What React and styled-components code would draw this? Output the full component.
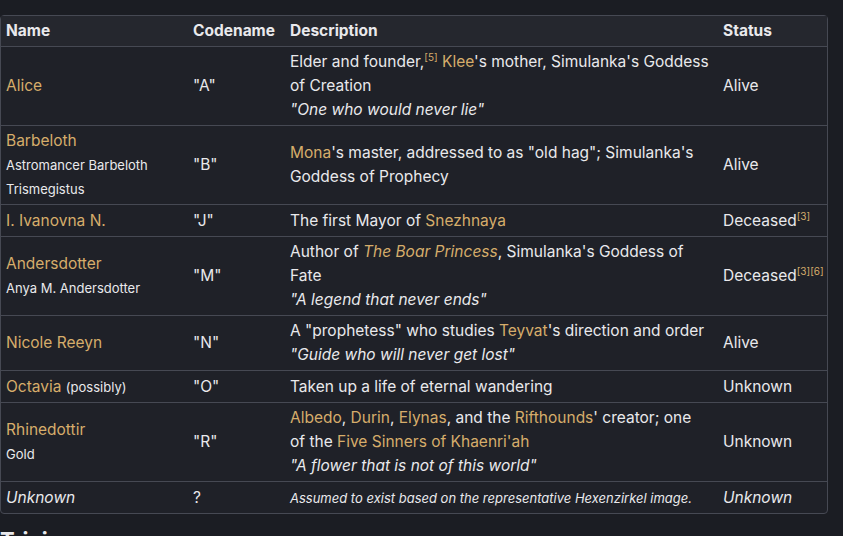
import styled, { createGlobalStyle } from "styled-components";

const GlobalStyle = createGlobalStyle`
  html, body {
    margin: 0;
    padding: 0;
    background: #1b1d23;
    color: #e9e9ec;
    font-family: Inter, "Open Sans", "Liberation Sans", sans-serif;
  }
`;

const Page = styled.div`
  padding: 15px 15px 0 0;
  height: 536px;
  box-sizing: border-box;
  overflow: hidden;
`;

const Table = styled.table`
  width: 828px;
  table-layout: fixed;
  border-collapse: separate;
  border-spacing: 0;
  border: 1px solid #464953;
  border-radius: 4px;
  background: #1f2128;
  font-size: 15.5px;
  line-height: 24px;
`;

const Th = styled.th`
  text-align: left;
  font-weight: 700;
  padding: 3px 5px;
  background: #25272e;
`;

const Td = styled.td`
  height: 25px;
  padding: 3px 5px;
  border-top: 1px solid #464953;
  vertical-align: middle;
  white-space: ${(p) => (p.$nowrap ? "nowrap" : "normal")};
  font-style: ${(p) => (p.$italic ? "italic" : "normal")};
  font-size: ${(p) => (p.$small ? "13px" : "inherit")};
`;

const Link = styled.span`
  color: #d6ad6b;
`;

const Sub = styled.span`
  font-size: 13px;
`;

const Quote = styled.i`
  display: block;
`;

const Ref = styled.sup`
  font-size: 10px;
  line-height: 0;
  color: #d6ad6b;
`;

const Heading = styled.h2`
  margin: 12px 0 0 0;
  font-size: 22px;
  line-height: 28px;
`;

const rows = [
  {
    name: <Link>Alice</Link>,
    code: '"A"',
    desc: (
      <>
        Elder and founder,<Ref>[5]</Ref> <Link>Klee</Link>'s mother, Simulanka's Goddess of Creation
        <Quote>"One who would never lie"</Quote>
      </>
    ),
    status: "Alive",
  },
  {
    name: (
      <>
        <Link>Barbeloth</Link>
        <br />
        <Sub>Astromancer Barbeloth Trismegistus</Sub>
      </>
    ),
    code: '"B"',
    desc: (
      <>
        <Link>Mona</Link>'s master, addressed to as "old hag"; Simulanka's Goddess of Prophecy
      </>
    ),
    status: "Alive",
  },
  {
    name: <Link>I. Ivanovna N.</Link>,
    code: '"J"',
    desc: (
      <>
        The first Mayor of <Link>Snezhnaya</Link>
      </>
    ),
    status: (
      <>
        Deceased<Ref>[3]</Ref>
      </>
    ),
  },
  {
    name: (
      <>
        <Link>Andersdotter</Link>
        <br />
        <Sub>Anya M. Andersdotter</Sub>
      </>
    ),
    code: '"M"',
    desc: (
      <>
        Author of <Link as="i">The Boar Princess</Link>, Simulanka's Goddess of Fate
        <Quote>"A legend that never ends"</Quote>
      </>
    ),
    status: (
      <>
        Deceased<Ref>[3]</Ref>
        <Ref>[6]</Ref>
      </>
    ),
  },
  {
    name: <Link>Nicole Reeyn</Link>,
    code: '"N"',
    desc: (
      <>
        A "prophetess" who studies <Link>Teyvat</Link>'s direction and order
        <Quote>"Guide who will never get lost"</Quote>
      </>
    ),
    status: "Alive",
  },
  {
    name: (
      <>
        <Link>Octavia</Link> <Sub>(possibly)</Sub>
      </>
    ),
    code: '"O"',
    desc: "Taken up a life of eternal wandering",
    status: "Unknown",
  },
  {
    name: (
      <>
        <Link>Rhinedottir</Link>
        <br />
        <Sub>Gold</Sub>
      </>
    ),
    code: '"R"',
    desc: (
      <>
        <Link>Albedo</Link>, <Link>Durin</Link>, <Link>Elynas</Link>, and the <Link>Rifthounds</Link>' creator; one
        <br />
        of the <Link>Five Sinners of Khaenri'ah</Link>
        <Quote>"A flower that is not of this world"</Quote>
      </>
    ),
    status: "Unknown",
  },
];

export default function App() {
  return (
    <Page>
      <GlobalStyle />
      <Table>
        <colgroup>
          <col style={{ width: 187 }} />
          <col style={{ width: 97 }} />
          <col style={{ width: 433 }} />
          <col />
        </colgroup>
        <thead>
          <tr>
            <Th>Name</Th>
            <Th>Codename</Th>
            <Th>Description</Th>
            <Th>Status</Th>
          </tr>
        </thead>
        <tbody>
          {rows.map((r, i) => (
            <tr key={i}>
              <Td>{r.name}</Td>
              <Td>{r.code}</Td>
              <Td>{r.desc}</Td>
              <Td $nowrap>{r.status}</Td>
            </tr>
          ))}
          <tr>
            <Td $italic>Unknown</Td>
            <Td>?</Td>
            <Td $italic $small>Assumed to exist based on the representative Hexenzirkel image.</Td>
            <Td $italic>Unknown</Td>
          </tr>
        </tbody>
      </Table>
      <Heading>Trivia</Heading>
    </Page>
  );
}
